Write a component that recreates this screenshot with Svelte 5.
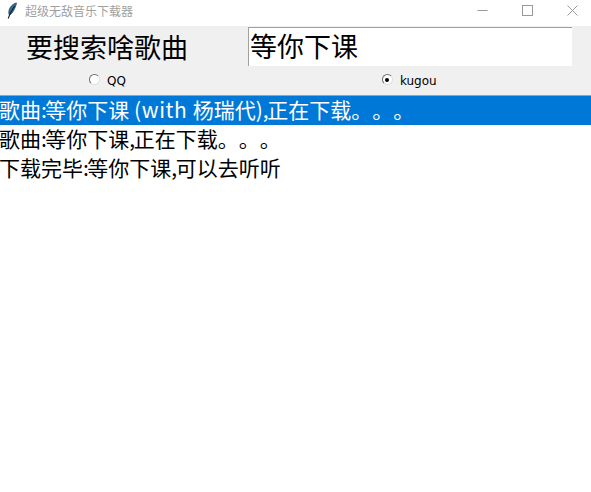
<script lang="ts">
  const rows = [
    { text: '歌曲:等你下课 (with 杨瑞代),正在下载。。。', selected: true },
    { text: '歌曲:等你下课,正在下载。。。', selected: false },
    { text: '下载完毕:等你下课,可以去听听', selected: false }
  ];

  let source = $state('kugou');

  // the ascii bits run at different widths from the cjk font, so they get their own spans
  const parts = (text: string) => text.split(/([:,]|\(with )/).filter(Boolean);
  const partClass = (part: string) =>
    part === ':' || part === ',' ? 'punct' : part.startsWith('(') ? 'latin' : '';
</script>

<div class="window">
  <header class="titlebar">
    <svg class="feather" width="12" height="18" viewBox="0 0 12 18">
      <path d="M10.5 1 C7 1.5 3.5 5 2.8 9.5 C2.6 11 3 12.5 3.6 13 C6.5 11.5 9.5 6 10.5 1 Z" fill="#2f6f96" stroke="#1c3550" stroke-width="0.7" />
      <path d="M8.5 4 L4 12 L2.2 16.5" fill="none" stroke="#10202f" stroke-width="1.1" />
    </svg>
    <span class="title">超级无敌音乐下载器</span>
    <div class="controls">
      <svg width="11" height="11" viewBox="0 0 11 11"><path d="M0.5 5.5 H10.5" stroke="#999" /></svg>
      <svg width="11" height="11" viewBox="0 0 11 11"><rect x="0.5" y="0.5" width="10" height="10" fill="none" stroke="#999" /></svg>
      <svg width="11" height="11" viewBox="0 0 11 11"><path d="M0.5 0.5 L10.5 10.5 M10.5 0.5 L0.5 10.5" stroke="#999" /></svg>
    </div>
  </header>

  <section class="form">
    <div class="search">
      <span class="label">要搜索啥歌曲</span>
      <input class="entry" value="等你下课" />
    </div>
    <div class="sources">
      <label class="radio qq">
        <input type="radio" bind:group={source} value="qq" />
        <span class="dot"></span>QQ
      </label>
      <label class="radio kugou">
        <input type="radio" bind:group={source} value="kugou" />
        <span class="dot"></span>kugou
      </label>
    </div>
  </section>

  <ul class="list">
    {#each rows as row}
      <li class:selected={row.selected}>
        {#each parts(row.text) as part}<span class={partClass(part)}>{part}</span>{/each}
      </li>
    {/each}
  </ul>
</div>

<style>
  :global(body) {
    margin: 0;
    background: #fff;
  }

  .window {
    width: 591px;
    height: 492px;
    overflow: hidden;
    font-family: "Noto Sans CJK SC", "Noto Sans", sans-serif;
    text-spacing-trim: space-all;
    color: #000;
  }

  .titlebar {
    height: 26px;
    display: flex;
    align-items: center;
    background: #fff;
  }

  .feather {
    margin-left: 6px;
    margin-top: -5px;
  }

  .title {
    margin-left: 7px;
    font-size: 12px;
    line-height: 20px;
    margin-top: -5px;
    color: #a0a0a0;
  }

  .controls {
    margin-left: auto;
    margin-top: -6px;
    margin-right: 13px;
    display: flex;
    gap: 34px;
  }

  .form {
    height: 69px;
    background: #f0f0f0;
  }

  .search {
    display: flex;
    padding-top: 1px;
    height: 39px;
  }

  .label {
    width: 248px;
    box-sizing: border-box;
    padding-left: 26px;
    font-size: 27px;
    line-height: 40px;
  }

  .entry {
    width: 324px;
    height: 39px;
    box-sizing: border-box;
    margin: 0;
    padding: 0 0 3px 1px;
    border: none;
    border-top: 1px solid #a0a0a0;
    border-left: 1px solid #a0a0a0;
    outline: none;
    background: #fff;
    font-family: inherit;
    font-size: 27px;
    color: #000;
  }

  .sources {
    display: flex;
    height: 29px;
    align-items: center;
  }

  .radio {
    display: flex;
    align-items: center;
    font-family: "DejaVu Sans", sans-serif;
    font-size: 12px;
    line-height: 16px;
  }

  .radio.qq {
    margin-left: 89px;
  }

  .radio.kugou {
    margin-left: 256px;
  }

  .radio input {
    display: none;
  }

  .dot {
    width: 9px;
    height: 9px;
    margin-right: 7px;
    margin-top: -2px;
    border-radius: 50%;
    background: #fff;
    border: 1px solid;
    border-color: #6e6e6e #e0e0e0 #e0e0e0 #6e6e6e;
    box-sizing: content-box;
    position: relative;
  }

  .radio input:checked + .dot::after {
    content: "";
    position: absolute;
    left: 2.5px;
    top: 2.5px;
    width: 4px;
    height: 4px;
    border-radius: 50%;
    background: #000;
  }

  .list {
    list-style: none;
    margin: 0;
    padding: 0;
    border-top: 1px solid #a0a0a0;
  }

  .list li {
    height: 29px;
    line-height: 27px;
    font-size: 21px;
    white-space: nowrap;
    text-indent: -1px;
  }

  .list li.selected {
    background: #0078d7;
    color: #fff;
  }

  .punct {
    letter-spacing: -1.5px;
  }

  .latin {
    letter-spacing: 0.6px;
  }
</style>
